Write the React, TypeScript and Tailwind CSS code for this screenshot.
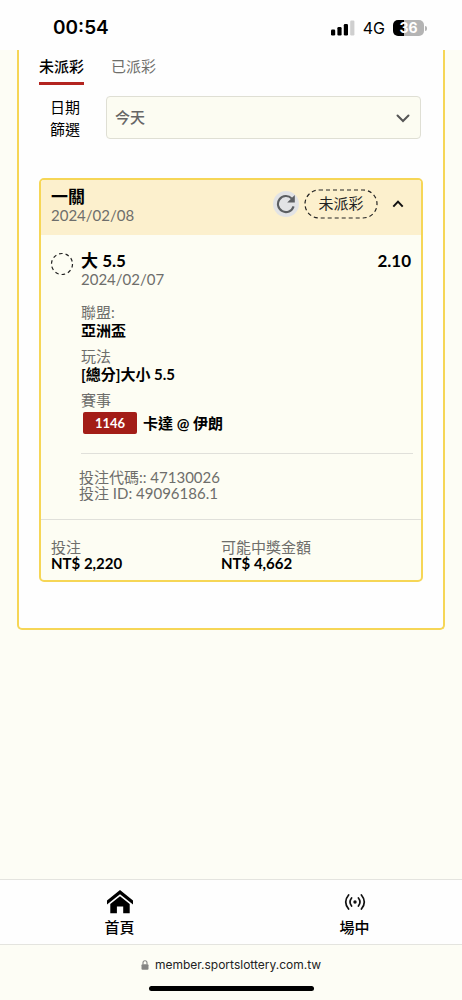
import React from 'react';

const HomeIcon: React.FC = () => (
    <svg width="28" height="26" viewBox="0 0 28 26" fill="#000" aria-hidden="true">
        <path d="M14 1 1 11.6v4L14 5.2l13 10.4v-4z" />
        <path d="M14 7.2 4.3 15v9.2h6.6v-6.6h6.3v6.6h6.5V15z" />
    </svg>
);

const LiveIcon: React.FC = () => (
    <svg width="22" height="18" viewBox="0 0 22 18" fill="none" stroke="#111" strokeWidth="1.7" strokeLinecap="round" aria-hidden="true">
        <circle cx="11" cy="9" r="1.7" fill="#111" stroke="none" />
        <path d="M7.6 5Q4.4 9 7.6 13M14.4 5q3.2 4 0 8" />
        <path d="M4.6 2Q-1.2 9 4.6 16M17.4 2q5.8 7 0 14" />
    </svg>
);

const RefreshIcon: React.FC = () => (
    <svg width="20" height="20" viewBox="0 0 20 20" fill="none" aria-hidden="true">
        <path d="M15.8 4.6A8 8 0 1 0 17.6 12.4" stroke="#5c5f62" strokeWidth="2.1" />
        <path d="M18.8 1v7.6h-7.6z" fill="#5c5f62" />
    </svg>
);

const StatusBar: React.FC = () => (
    <header className="flex h-[50px] items-center justify-between bg-[#fefefe] pt-1.5 pr-[35px] pl-[53px] font-[Inter,sans-serif] text-black">
        <span className="text-[19px] leading-6 font-semibold">00:54</span>
        <div className="flex items-center">
            <svg width="24" height="16" viewBox="0 0 24 16" aria-hidden="true">
                <rect x="0" y="9.5" width="4.2" height="6" rx="1.2" />
                <rect x="6.4" y="7" width="4.2" height="8.5" rx="1.2" />
                <rect x="12.8" y="4" width="4.2" height="11.5" rx="1.2" />
                <rect x="19.2" y="0.5" width="4.2" height="15" rx="1.2" fill="#cfcfcf" />
            </svg>
            <span className="ml-2 text-[16px] leading-6">4G</span>
            <div className="relative ml-2 flex h-4 w-[31px] items-center justify-center overflow-hidden rounded-[5px] bg-linear-to-r from-black from-36% to-[#b4b4b4] to-36% text-[14px] leading-4 font-bold text-white">
                36
            </div>
            <div className="ml-px h-[5px] w-0.5 rounded-r-sm bg-[#b4b4b4]" />
        </div>
    </header>
);

const Detail: React.FC<{ label: string; children: React.ReactNode }> = ({ label, children }) => (
    <div className="mb-2">
        <div className="leading-[18px] text-[#6e6e6b]">{label}</div>
        <div className="leading-[18px] font-bold">{children}</div>
    </div>
);

const Amount: React.FC<{ label: string; value: string }> = ({ label, value }) => (
    <div>
        <div className="leading-4 text-[#6e6e6b]">{label}</div>
        <div className="leading-4 font-bold">{value}</div>
    </div>
);

const BetCard: React.FC = () => (
    <article className="mt-[38px] rounded-[5px] border-2 border-[#f6d656] bg-[#fdfdf3]">
        <div className="flex h-[55px] items-center rounded-t-[3px] bg-[#fcf0cd] pr-[17px] pl-2.5">
            <div className="flex-1 pb-1">
                <h2 className="text-[17px] leading-[18px] font-bold">一關</h2>
                <div className="leading-[18px] text-[#6e6e6b]">2024/02/08</div>
            </div>
            <div className="flex items-center pb-2">
                <button type="button" aria-label="重新整理" className="flex size-[26px] items-center justify-center rounded-full bg-[#e2e3e5]">
                    <RefreshIcon />
                </button>
                <div className="relative ml-[5px] flex h-[30px] w-[74px] items-center justify-center">
                    <svg className="absolute inset-0 size-full" fill="none" aria-hidden="true">
                        <rect x="1" y="1" width="72" height="28" rx="14" stroke="#222" strokeWidth="1.2" strokeDasharray="4 3" />
                    </svg>
                    <span className="text-[#222]">未派彩</span>
                </div>
                <button type="button" aria-label="收合" className="ml-3.5 flex h-6 w-3 items-center">
                    <svg width="12" height="8" viewBox="0 0 12 8" fill="none" stroke="#111" strokeWidth="2" aria-hidden="true">
                        <path d="m1.3 6.6 4.7-5 4.7 5" />
                    </svg>
                </button>
            </div>
        </div>

        <div className="flex pt-4 pr-2 pb-[18px] pl-[9px]">
            <svg className="mt-px shrink-0" width="24" height="24" viewBox="0 0 24 24" fill="none" aria-hidden="true">
                <circle cx="12" cy="12" r="10.5" stroke="#222" strokeWidth="1.2" strokeDasharray="3.6 3" />
            </svg>
            <div className="ml-[7px] flex-1">
                <div className="flex justify-between pr-0.5 text-[17px] leading-5 font-bold">
                    <h3>大 5.5</h3>
                    <span>2.10</span>
                </div>
                <div className="mb-4 leading-4 text-[#6e6e6b]">2024/02/07</div>
                <Detail label="聯盟:">亞洲盃</Detail>
                <Detail label="玩法">[總分]大小 5.5</Detail>
                <div className="leading-[18px] text-[#6e6e6b]">賽事</div>
                <div className="mt-[3px] flex items-center pl-0.5 font-bold">
                    <span className="w-[54px] rounded-[2px] bg-[#a31d17] text-center text-[13px] leading-[22px] text-white">1146</span>
                    <span className="ml-1.5 leading-[22px]">卡達 @ 伊朗</span>
                </div>
                <hr className="mt-[19px] border-[#e0e0da]" />
                <div className="-ml-0.5 pt-[15px] leading-4 text-[#6e6e6b]">
                    <div>投注代碼:: 47130026</div>
                    <div>投注 ID: 49096186.1</div>
                </div>
            </div>
        </div>

        <div className="grid grid-cols-[170px_1fr] border-t border-[#e0e0da] px-2.5 pt-[19px] pb-[9px]">
            <Amount label="投注" value="NT$ 2,220" />
            <Amount label="可能中獎金額" value="NT$ 4,662" />
        </div>
    </article>
);

export default function App() {
    return (
        <div className="flex min-h-screen flex-col bg-[#fdfdf5] font-[Lato,'Noto_Sans_CJK_TC',sans-serif] text-[15px] text-black">
            <StatusBar />

            <main className="mr-[17px] ml-[17px] rounded-b-[5px] border-2 border-t-0 border-[#f6d656] bg-[#fefefe] px-5 pb-[46px]">
                <nav className="flex gap-[27px] pt-1">
                    <button type="button" className="border-b-[3px] border-[#b3241f] pb-1 leading-6 font-medium">未派彩</button>
                    <button type="button" className="border-b-[3px] border-transparent pb-1 leading-6 text-[#6e6e6b]">已派彩</button>
                </nav>

                <div className="mt-[11px] mr-0.5 flex">
                    <label htmlFor="date" className="w-[67px] pl-[11px] leading-[22px]">
                        日期
                        <br />
                        篩選
                    </label>
                    <div className="relative flex-1">
                        <select id="date" className="h-[43px] w-full appearance-none rounded-[4px] border border-[#dfdfd4] bg-[#fcfcf2] px-2 font-medium text-[#666]">
                            <option>今天</option>
                        </select>
                        <svg className="pointer-events-none absolute top-[18px] right-[11px]" width="14" height="9" viewBox="0 0 14 9" fill="none" stroke="#555" strokeWidth="2" strokeLinecap="round" aria-hidden="true">
                            <path d="m1.5 1.5 5.5 5.5 5.5-5.5" />
                        </svg>
                    </div>
                </div>

                <BetCard />
            </main>

            <footer className="mt-auto">
                <nav className="grid h-[66px] grid-cols-2 gap-5 border-y border-[#e4e4df] bg-[#fefefe] pl-3 font-medium">
                    <a href="#home" className="flex flex-col items-center pt-2">
                        <span className="flex h-7 items-center"><HomeIcon /></span>
                        <span className="leading-[22px]">首頁</span>
                    </a>
                    <a href="#live" className="flex flex-col items-center pt-2">
                        <span className="flex h-7 items-center"><LiveIcon /></span>
                        <span className="leading-[22px]">場中</span>
                    </a>
                </nav>
                <div className="flex flex-col items-center pt-[11px] pb-[9px] font-[Inter,sans-serif] text-[12px] text-[#222]">
                    <div className="flex items-center gap-1.5">
                        <svg width="8" height="10" viewBox="0 0 8 10" aria-hidden="true">
                            <rect x="0.5" y="4.2" width="7" height="5.6" rx="1" fill="#858583" />
                            <path d="M2 4.5V2.8a2 2 0 0 1 4 0v1.7" fill="none" stroke="#858583" strokeWidth="1.1" />
                        </svg>
                        <span className="leading-[18px]">member.sportslottery.com.tw</span>
                    </div>
                    <div className="mt-3 h-[5px] w-[165px] rounded-full bg-black" />
                </div>
            </footer>
        </div>
    );
}
